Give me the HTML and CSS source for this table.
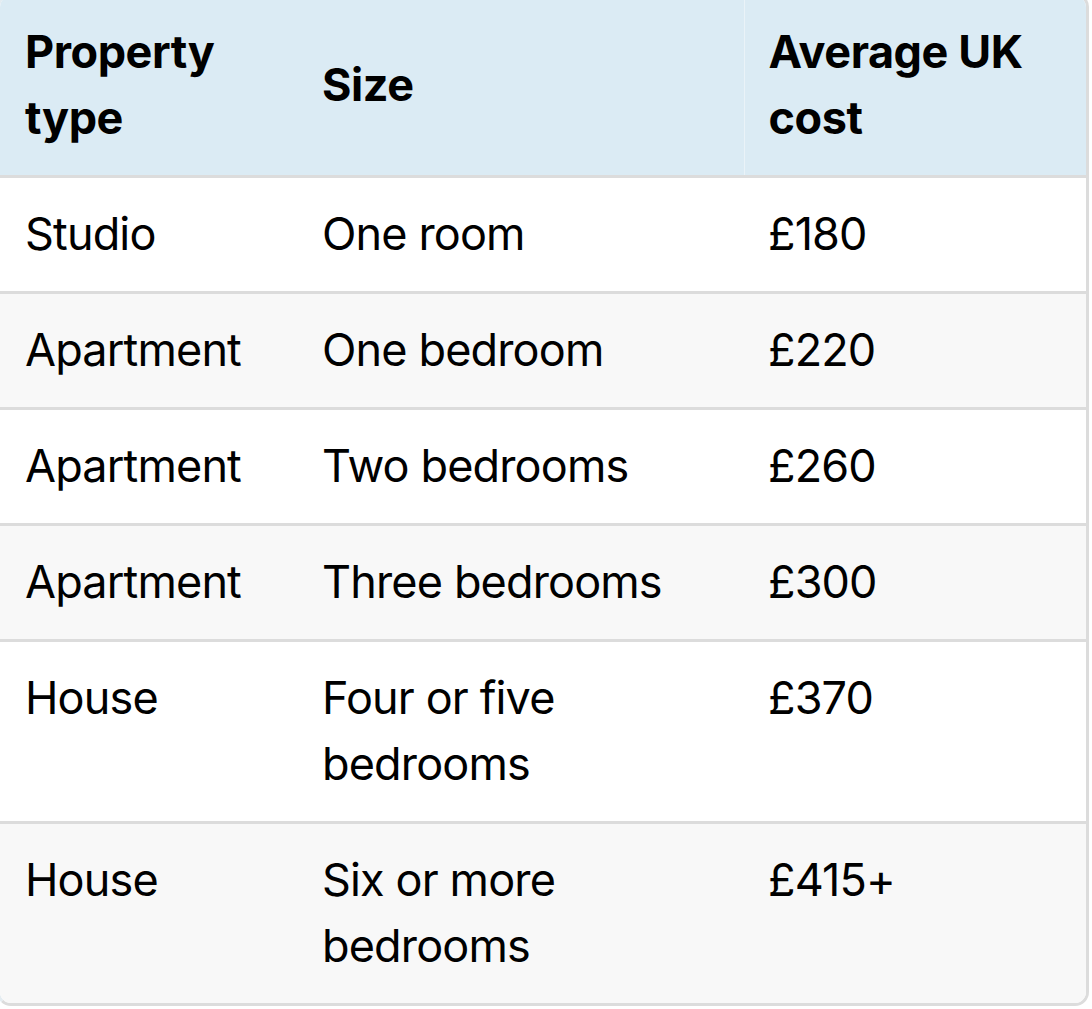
FILE: index.html
```html
<!DOCTYPE html>
<html lang="en">
<head>
<meta charset="utf-8">
<title>Property costs</title>
<link rel="stylesheet" href="styles.css">
</head>
<body>
<div class="table-wrap">
  <table class="cost-table">
    <colgroup>
      <col class="c1">
      <col class="c2">
      <col class="c3">
    </colgroup>
    <thead>
      <tr>
        <th>Property<br>type</th>
        <th>Size</th>
        <th class="sep">Average UK<br>cost</th>
      </tr>
    </thead>
    <tbody>
      <tr><td>Studio</td><td>One room</td><td>£180</td></tr>
      <tr><td>Apartment</td><td>One bedroom</td><td>£220</td></tr>
      <tr><td>Apartment</td><td>Two bedrooms</td><td>£260</td></tr>
      <tr><td>Apartment</td><td>Three bedrooms</td><td>£300</td></tr>
      <tr><td>House</td><td>Four or five<br>bedrooms</td><td>£370</td></tr>
      <tr><td>House</td><td>Six or more<br>bedrooms</td><td>£415+</td></tr>
    </tbody>
  </table>
</div>
</body>
</html>
```
FILE: styles.css
```css
html, body {
  margin: 0;
  padding: 0;
  background: #ffffff;
}

body {
  font-family: Inter, "Noto Sans", "Liberation Sans", sans-serif;
  color: #000000;
  overflow: hidden;
}

.table-wrap {
  width: 1092px;
  margin-left: -3px;
  margin-top: -7px;
  border: 3px solid #dcdcdc;
  border-left-color: #e4ecf1;
  border-radius: 14px;
  overflow: hidden;
  box-sizing: border-box;
}

.cost-table {
  width: 100%;
  border-collapse: collapse;
  table-layout: fixed;
}

.c1 { width: 298px; }
.c2 { width: 446px; }
.c3 { width: auto; }

.cost-table th,
.cost-table td {
  padding: 23px 20px 24px 24px;
  font-size: 45px;
  line-height: 66px;
  text-align: left;
  letter-spacing: -0.85px;
}

.cost-table th:first-child,
.cost-table td:first-child {
  padding-left: 25px;
}

.cost-table th {
  background: #dbebf4;
  font-weight: 700;
  vertical-align: middle;
  letter-spacing: -0.45px;
}

.cost-table th.sep {
  border-left: 1px solid #eaf3f8;
}

.cost-table td {
  font-weight: 400;
  vertical-align: top;
}

.cost-table tr {
  border-top: 3px solid #dcdcdc;
}

.cost-table thead tr {
  border-top: none;
}

.cost-table tbody tr:nth-child(odd) td {
  background: #ffffff;
}

.cost-table tbody tr:nth-child(even) td {
  background: #f8f8f8;
}
```
